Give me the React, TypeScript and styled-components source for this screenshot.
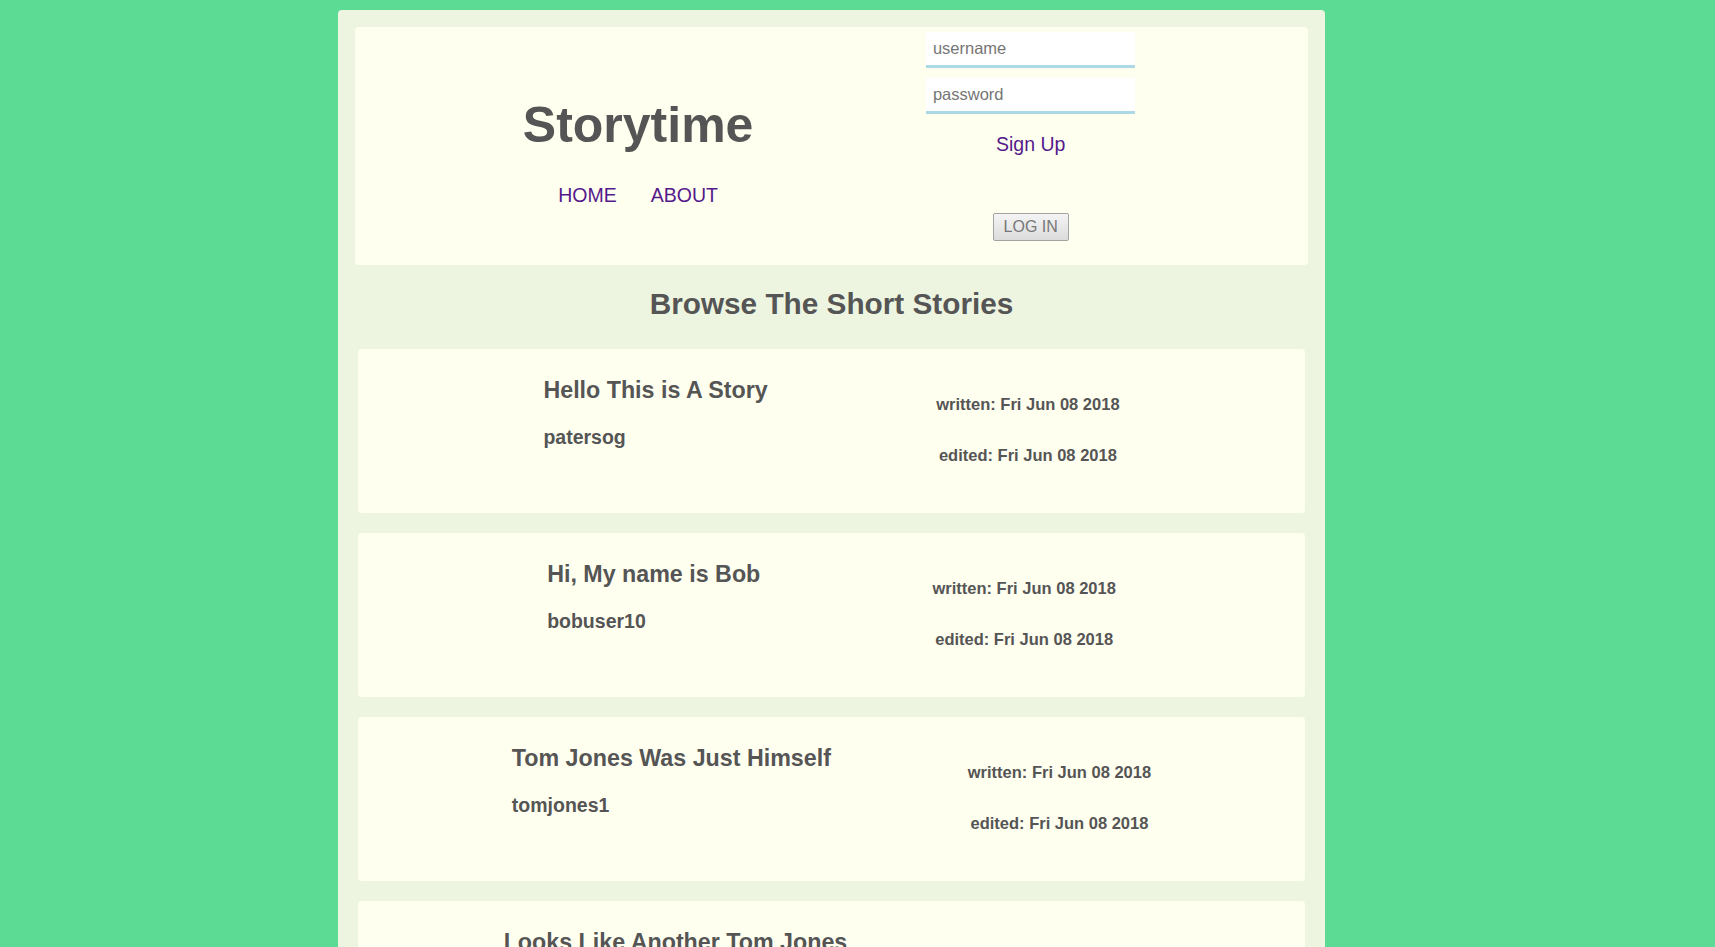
import React from "react";
import styled, { createGlobalStyle } from "styled-components";

const GlobalStyle = createGlobalStyle`
  html, body {
    margin: 0;
    padding: 0;
    background: #5cdb95;
    font-family: "Liberation Sans", Arial, sans-serif;
    color: #555555;
  }
`;

const Page = styled.div`
  padding: 10px 0 0 338px;
`;

const Container = styled.main`
  width: 987px;
  box-sizing: border-box;
  min-height: 1100px;
  background: #edf5e1;
  border-radius: 4px 4px 0 0;
  padding: 17px 17px 40px;
`;

const Header = styled.header`
  height: 238px;
  box-sizing: border-box;
  background: #fffff0;
  border-radius: 4px;
  display: flex;
  justify-content: space-evenly;
  align-items: flex-start;
`;

const Brand = styled.div`
  display: flex;
  flex-direction: column;
  align-items: center;
  padding-top: 70.2px;
  margin-left: -5px;
`;

const Title = styled.h1`
  margin: 0;
  font-size: 50px;
  line-height: 57px;
  font-weight: bold;
  color: #555555;
`;

const Nav = styled.nav`
  display: flex;
  gap: 34px;
  margin-top: 29.8px;
`;

const Link = styled.a`
  font-size: 19.5px;
  line-height: 22px;
  color: #551a8b;
  text-decoration: none;
  cursor: pointer;
`;

const LoginForm = styled.form`
  display: flex;
  flex-direction: column;
  align-items: center;
  width: 209px;
  padding-top: 5px;
`;

const Input = styled.input`
  width: 209px;
  height: 36px;
  box-sizing: border-box;
  border: none;
  border-bottom: 3px solid #add8e6;
  background: #ffffff;
  padding: 0 6.7px;
  font-family: "Liberation Sans", Arial, sans-serif;
  font-size: 16.5px;
  color: #555555;
  outline: none;
  & + & {
    margin-top: 10px;
  }
  &::placeholder {
    color: #757575;
  }
`;

const SignUp = styled(Link)`
  margin-top: 19.2px;
`;

const LoginButton = styled.button`
  margin-top: 58px;
  width: 76px;
  height: 28px;
  box-sizing: border-box;
  padding: 0;
  border: 1px solid #a3a3a3;
  border-radius: 2px;
  background: linear-gradient(#f4f4f4, #dcdcdc);
  font-family: "Liberation Sans", Arial, sans-serif;
  font-size: 16px;
  color: #777777;
`;

const Heading = styled.h2`
  margin: 21.6px 0 28px;
  text-align: center;
  font-size: 29.75px;
  line-height: 34px;
  font-weight: bold;
  color: #555555;
`;

const StoryList = styled.section`
  display: flex;
  flex-direction: column;
  gap: 20px;
  padding: 0 3px;
`;

const StoryCard = styled.article`
  height: 164px;
  box-sizing: border-box;
  padding: 0 17px;
  background: #fffff0;
  border-radius: 4px;
  display: flex;
  justify-content: space-evenly;
  align-items: flex-start;
`;

const StoryInfo = styled.div`
  padding-top: 28.4px;
`;

const StoryTitle = styled.h3`
  margin: 0;
  font-size: 23.25px;
  line-height: 27px;
  font-weight: bold;
  color: #555555;
  white-space: nowrap;
`;

const Author = styled.h4`
  margin: 22.3px 0 0;
  font-size: 19.5px;
  line-height: 22px;
  font-weight: bold;
  color: #555555;
`;

const Dates = styled.div`
  padding-top: 46.5px;
  text-align: center;
`;

const DateLine = styled.h5`
  margin: 0;
  font-size: 16.5px;
  line-height: 19px;
  font-weight: bold;
  color: #555555;
  white-space: nowrap;
  & + & {
    margin-top: 31.7px;
  }
`;

const stories = [
  { title: "Hello This is A Story", author: "patersog" },
  { title: "Hi, My name is Bob", author: "bobuser10" },
  { title: "Tom Jones Was Just Himself", author: "tomjones1" },
  { title: "Looks Like Another Tom Jones", author: "tomjones2" },
];

export default function App() {
  return (
    <>
      <GlobalStyle />
      <Page>
        <Container>
          <Header>
            <Brand>
              <Title>Storytime</Title>
              <Nav>
                <Link>HOME</Link>
                <Link>ABOUT</Link>
              </Nav>
            </Brand>
            <LoginForm onSubmit={(e) => e.preventDefault()}>
              <Input type="text" placeholder="username" />
              <Input type="password" placeholder="password" />
              <SignUp>Sign Up</SignUp>
              <LoginButton type="submit">LOG IN</LoginButton>
            </LoginForm>
          </Header>
          <Heading>Browse The Short Stories</Heading>
          <StoryList>
            {stories.map((s) => (
              <StoryCard key={s.title}>
                <StoryInfo>
                  <StoryTitle>{s.title}</StoryTitle>
                  <Author>{s.author}</Author>
                </StoryInfo>
                <Dates>
                  <DateLine>written: Fri Jun 08 2018</DateLine>
                  <DateLine>edited: Fri Jun 08 2018</DateLine>
                </Dates>
              </StoryCard>
            ))}
          </StoryList>
        </Container>
      </Page>
    </>
  );
}
